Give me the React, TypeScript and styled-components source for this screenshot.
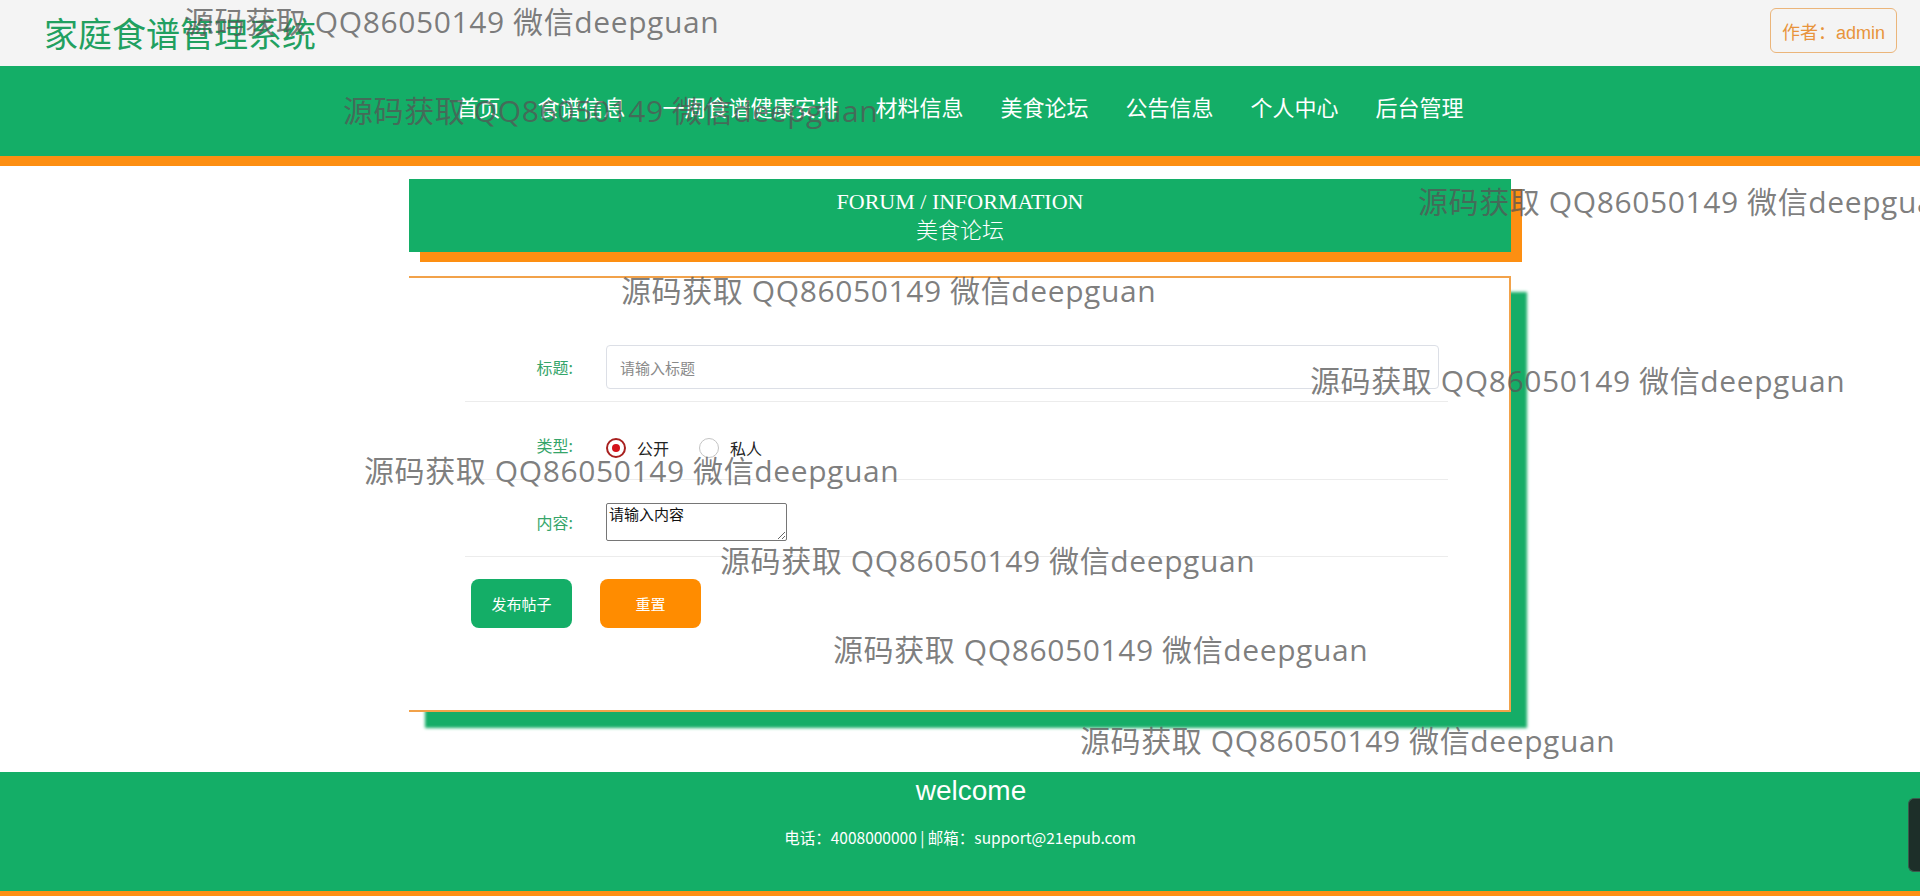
import styled, { createGlobalStyle } from "styled-components";

const GREEN = "#14ae67";
const ORANGE = "#fd8f12";

const GlobalStyle = createGlobalStyle`
  html, body {
    margin: 0;
    padding: 0;
    background: #fff;
  }
  body {
    font-family: "Noto Sans CJK SC", "Noto Sans", sans-serif;
  }
`;

const Page = styled.div`
  position: relative;
  width: 1920px;
  height: 896px;
  overflow: hidden;
  display: flex;
  flex-direction: column;
`;

const TopBar = styled.header`
  height: 66px;
  flex-shrink: 0;
  background: #f4f4f4;
  display: flex;
  justify-content: space-between;
  align-items: center;
  padding: 0 23px 0 44px;
  box-sizing: border-box;
`;

const SiteTitle = styled.h1`
  margin: 0;
  font-size: 34px;
  line-height: 1;
  font-weight: normal;
  color: #21a060;
`;

const AuthorButton = styled.button`
  align-self: flex-start;
  margin-top: 8px;
  width: 127px;
  height: 45px;
  border: 1px solid #ebb57a;
  border-radius: 6px;
  background: transparent;
  color: #e8943c;
  font-family: "Liberation Sans", "Noto Sans CJK SC", sans-serif;
  font-size: 18px;
  cursor: pointer;
`;

const NavBar = styled.nav`
  height: 100px;
  flex-shrink: 0;
  box-sizing: border-box;
  background: ${GREEN};
  border-bottom: 10px solid ${ORANGE};
  padding-bottom: 10px;
  display: flex;
  justify-content: center;
  align-items: center;
  gap: 37px;
`;

const NavLink = styled.a`
  color: #fff;
  font-size: 22px;
  line-height: 1;
  text-decoration: none;
  cursor: pointer;
`;

const Main = styled.main`
  flex: 1;
  padding-top: 13px;
`;

const SectionHead = styled.div`
  width: 1102px;
  height: 73px;
  margin: 0 auto;
  background: ${GREEN};
  box-shadow: 11px 10px 0 ${ORANGE};
  display: flex;
  flex-direction: column;
  align-items: center;
  justify-content: center;
  color: #fff;
`;

const SectionEn = styled.div`
  font-family: "Liberation Serif", serif;
  font-size: 22px;
  line-height: 26px;
  margin-top: -2px;
`;

const SectionCn = styled.div`
  font-size: 22px;
  line-height: 26px;
  font-weight: 300;
`;

const FormCard = styled.form`
  width: 1102px;
  height: 436px;
  margin: 24px auto 0;
  box-sizing: border-box;
  background: #fff;
  border: 2px solid #f2a24a;
  border-left: none;
  box-shadow: 16px 16px 3px #15ad67;
  padding: 55px 61px 0 56px;
`;

const FormRow = styled.div<{ $pt: number; $pb: number }>`
  display: flex;
  align-items: center;
  padding: ${(p) => p.$pt}px 9px ${(p) => p.$pb}px 0;
  border-bottom: 1px solid #ececec;
`;

const FieldLabel = styled.label<{ $lift?: number }>`
  width: 108px;
  margin-right: 33px;
  margin-top: ${(p) => -(p.$lift ?? 0)}px;
  flex-shrink: 0;
  text-align: right;
  color: #35a56a;
  font-size: 16px;
`;

const TextInput = styled.input`
  flex: 1;
  height: 44px;
  box-sizing: border-box;
  border: 1px solid #dcdfe6;
  border-radius: 4px;
  padding: 0 13px;
  font-family: inherit;
  font-size: 15px;
  outline: none;
  &::placeholder {
    color: #8a8a8a;
  }
`;

const RadioGroup = styled.div`
  display: flex;
  align-items: center;
`;

const RadioOption = styled.label`
  display: flex;
  align-items: center;
  gap: 11px;
  margin-right: 30px;
  font-size: 16px;
  color: #222;
  cursor: pointer;
`;

const RadioDot = styled.input`
  appearance: none;
  margin: 0;
  width: 20px;
  height: 20px;
  border-radius: 50%;
  border: 1.5px solid #c4c4c4;
  box-sizing: border-box;
  background: #fff;
  display: grid;
  place-items: center;
  &:checked {
    border: 2px solid #a8201f;
  }
  &:checked::after {
    content: "";
    width: 8px;
    height: 8px;
    border-radius: 50%;
    background: #d4121a;
  }
`;

const TextArea = styled.textarea`
  width: 181px;
  height: 38px;
  box-sizing: border-box;
  border: 1px solid #767676;
  border-radius: 2px;
  padding: 1px 2px;
  font-family: inherit;
  font-size: 15px;
  line-height: 1.2;
  &::placeholder {
    color: #111;
  }
`;

const ButtonRow = styled.div`
  display: flex;
  gap: 28px;
  margin-top: 22px;
  padding-left: 6px;
`;

const ActionButton = styled.button<{ $tone: "green" | "orange" }>`
  width: 101px;
  height: 49px;
  border: none;
  border-radius: 8px;
  background: ${(p) => (p.$tone === "green" ? GREEN : "#ff8c00")};
  color: #fff;
  font-family: inherit;
  font-size: 15px;
  cursor: pointer;
`;

const Footer = styled.footer`
  height: 124px;
  flex-shrink: 0;
  box-sizing: border-box;
  background: ${GREEN};
  border-bottom: 5px solid ${ORANGE};
  padding-top: 1px;
  display: flex;
  flex-direction: column;
  align-items: center;
  color: #fff;
`;

const Welcome = styled.div`
  font-family: "Liberation Sans", sans-serif;
  font-size: 28px;
  line-height: 36px;
  margin-left: 22px;
`;

const Contact = styled.div`
  margin-top: 18px;
  font-size: 15.5px;
  line-height: 20px;
`;

const Watermark = styled.span<{ $x: number; $y: number }>`
  position: absolute;
  left: ${(p) => p.$x}px;
  top: ${(p) => p.$y}px;
  font-family: "Open Sans", "Noto Sans CJK SC", sans-serif;
  font-size: 30px;
  letter-spacing: 0.6px;
  line-height: 38px;
  color: rgba(85, 85, 85, 0.75);
  white-space: nowrap;
  pointer-events: none;
`;

const SideWidget = styled.div`
  position: absolute;
  right: 0;
  top: 798px;
  width: 12px;
  height: 74px;
  border-radius: 6px 0 0 6px;
  background: #1d2f29;
  border: 1px solid #3b5a4d;
  border-right: none;
  box-sizing: border-box;
`;

const navItems = ["首页", "食谱信息", "一周食谱健康安排", "材料信息", "美食论坛", "公告信息", "个人中心", "后台管理"];

const marks = [
  [184, 3],
  [343, 92],
  [1418, 183],
  [621, 272],
  [1310, 362],
  [364, 452],
  [720, 542],
  [833, 631],
  [1080, 722],
];

export default function App() {
  return (
    <Page>
      <GlobalStyle />
      <TopBar>
        <SiteTitle>家庭食谱管理系统</SiteTitle>
        <AuthorButton>作者：admin</AuthorButton>
      </TopBar>
      <NavBar>
        {navItems.map((item) => (
          <NavLink key={item}>{item}</NavLink>
        ))}
      </NavBar>
      <Main>
        <SectionHead>
          <SectionEn>FORUM / INFORMATION</SectionEn>
          <SectionCn>美食论坛</SectionCn>
        </SectionHead>
        <FormCard onSubmit={(e) => e.preventDefault()}>
          <FormRow $pt={12} $pb={12}>
            <FieldLabel>标题:</FieldLabel>
            <TextInput placeholder="请输入标题" />
          </FormRow>
          <FormRow $pt={34} $pb={19}>
            <FieldLabel $lift={6}>类型:</FieldLabel>
            <RadioGroup>
              <RadioOption>
                <RadioDot type="radio" name="kind" defaultChecked />
                公开
              </RadioOption>
              <RadioOption>
                <RadioDot type="radio" name="kind" />
                私人
              </RadioOption>
            </RadioGroup>
          </FormRow>
          <FormRow $pt={23} $pb={15}>
            <FieldLabel>内容:</FieldLabel>
            <TextArea placeholder="请输入内容" />
          </FormRow>
          <ButtonRow>
            <ActionButton $tone="green" type="submit">发布帖子</ActionButton>
            <ActionButton $tone="orange" type="reset">重置</ActionButton>
          </ButtonRow>
        </FormCard>
      </Main>
      <Footer>
        <Welcome>welcome</Welcome>
        <Contact>电话：4008000000 | 邮箱：support@21epub.com</Contact>
      </Footer>
      {marks.map(([x, y]) => (
        <Watermark key={`${x}-${y}`} $x={x} $y={y}>
          源码获取 QQ86050149 微信deepguan
        </Watermark>
      ))}
      <SideWidget />
    </Page>
  );
}
